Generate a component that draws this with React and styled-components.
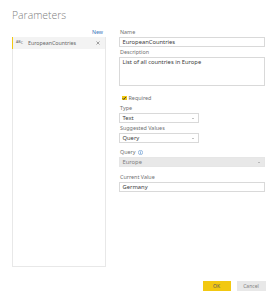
import React from "react";
import styled, { createGlobalStyle } from "styled-components";

const Global = createGlobalStyle`
  html, body { margin: 0; padding: 0; background: #fff; }
  body { font-family: "Noto Sans", "Open Sans", sans-serif; color: #333; }
  * { box-sizing: border-box; }
`;

const Page = styled.div`
  width: 276px;
  height: 300px;
  padding: 8px 10px 0 12px;
  display: flex;
  flex-direction: column;
`;

const Title = styled.div`
  font-family: "Open Sans", "Noto Sans", sans-serif;
  font-weight: 300;
  font-size: 10.4px;
  line-height: 15px;
  color: #808080;
`;

const Body = styled.div`
  display: flex;
  gap: 13px;
  margin-top: 5px;
  align-items: flex-start;
`;

const LeftCol = styled.div`
  width: 94px;
  display: flex;
  flex-direction: column;
`;

const NewLink = styled.div`
  align-self: flex-end;
  margin-right: 3px;
  font-size: 5.3px;
  line-height: 9px;
  color: #3a75bb;
`;

const ListPanel = styled.div`
  height: 230px;
  border: 1px solid #e8e8e8;
`;

const ListItem = styled.div`
  height: 12px;
  display: flex;
  align-items: center;
  border-left: 1.5px solid ${(p) => (p.$selected ? "#f2c811" : "transparent")};
  background: ${(p) => (p.$selected ? "#f3f3f3" : "transparent")};
  padding: 0 5px 0 3px;
  margin-top: -1px;
  margin-left: -1px;
`;

const ParamIcon = styled.span`
  width: 8px;
  font-size: 3.6px;
  line-height: 1;
  color: #666;
  display: flex;
  align-items: flex-end;
  span:nth-child(1) { transform: translateY(-1.5px); }
  span:nth-child(2) { transform: translateY(-0.6px); }
`;

const ItemText = styled.span`
  flex: 1;
  margin-left: 4px;
  font-size: 5.3px;
  color: #666;
  white-space: nowrap;
`;

const RightCol = styled.div`
  width: 146px;
  display: flex;
  flex-direction: column;
`;

const Field = styled.div`
  display: flex;
  flex-direction: column;
  margin-top: ${(p) => p.$mt || 0}px;
`;

const Label = styled.div`
  font-size: 5.4px;
  line-height: 8px;
  height: 8px;
  color: #707070;
  margin-bottom: 1px;
  padding-left: 1px;
  display: flex;
  align-items: center;
  gap: 2px;
`;

const Input = styled.div`
  height: ${(p) => p.$h || 10}px;
  width: ${(p) => p.$w || 146}px;
  border: 1px solid ${(p) => (p.$disabled ? "#e6e6e6" : "#d9d9d9")};
  background: ${(p) => (p.$disabled ? "#e8e8e8" : "#fff")};
  color: ${(p) => (p.$disabled ? "#808080" : "#3c3c3c")};
  font-size: 5.8px;
  line-height: 8px;
  padding: 0 0 0 2.5px;
  display: flex;
  align-items: ${(p) => (p.$multi ? "flex-start" : "center")};
  justify-content: space-between;
  white-space: nowrap;
`;

const Arrow = styled.span`
  width: 0;
  height: 0;
  border-left: 1.2px solid transparent;
  border-right: 1.2px solid transparent;
  border-top: 1.6px solid #888;
  margin-right: 4px;
`;

const CheckRow = styled.div`
  margin-top: 8px;
  height: 8px;
  display: flex;
  align-items: center;
  gap: 2px;
  margin-left: 3px;
  font-size: 5.4px;
  color: #707070;
`;

const Box = styled.span`
  width: 4.5px;
  height: 4.5px;
  background: #f2c811;
  display: flex;
  align-items: center;
  justify-content: center;
`;

const Footer = styled.div`
  display: flex;
  justify-content: flex-end;
  gap: 6px;
  margin-top: 14px;
  padding-right: 0.5px;
`;

const Button = styled.button`
  width: ${(p) => (p.$primary ? 28 : 29)}px;
  height: 10px;
  border: none;
  padding: 0;
  font-family: inherit;
  font-size: 5px;
  color: ${(p) => (p.$primary ? "#5a5a5a" : "#808080")};
  background: ${(p) => (p.$primary ? "#f2c811" : "#e8e8e8")};
`;

function InfoIcon() {
  return (
    <svg width="5" height="5" viewBox="0 0 10 10">
      <circle cx="5" cy="5" r="4.3" fill="none" stroke="#3b7dc4" strokeWidth="1" />
      <path d="M5 4.2V7.6" stroke="#3b7dc4" strokeWidth="1.2" />
      <circle cx="5" cy="2.7" r="0.7" fill="#3b7dc4" />
    </svg>
  );
}

export default function App() {
  return (
    <>
      <Global />
      <Page>
        <Title>Parameters</Title>
        <Body>
          <LeftCol>
            <NewLink>New</NewLink>
            <ListPanel>
              <ListItem $selected>
                <ParamIcon>
                  <span>A</span>
                  <span>B</span>
                  <span>C</span>
                </ParamIcon>
                <ItemText>EuropeanCountries</ItemText>
                <svg width="4" height="4" viewBox="0 0 4 4">
                  <path d="M0.5 0.5L3.5 3.5M3.5 0.5L0.5 3.5" stroke="#666" strokeWidth="0.6" />
                </svg>
              </ListItem>
            </ListPanel>
          </LeftCol>
          <RightCol>
            <Field $mt={0}>
              <Label>Name</Label>
              <Input>EuropeanCountries</Input>
            </Field>
            <Field $mt={1}>
              <Label>Description</Label>
              <Input $h={29} $multi>List of all countries in Europe</Input>
            </Field>
            <CheckRow>
              <Box>
                <svg width="4.5" height="4.5" viewBox="0 0 4 4">
                  <path d="M0.6 2L1.6 3.1L3.4 0.9" stroke="#333" strokeWidth="0.8" fill="none" />
                </svg>
              </Box>
              Required
            </CheckRow>
            <Field $mt={2}>
              <Label>Type</Label>
              <Input $w={80}>
                Text<Arrow />
              </Input>
            </Field>
            <Field $mt={1}>
              <Label>Suggested Values</Label>
              <Input $w={80}>
                Query<Arrow />
              </Input>
            </Field>
            <Field $mt={5}>
              <Label>
                Query<InfoIcon />
              </Label>
              <Input $disabled>
                Europe<Arrow />
              </Input>
            </Field>
            <Field $mt={6}>
              <Label>Current Value</Label>
              <Input>Germany</Input>
            </Field>
          </RightCol>
        </Body>
        <Footer>
          <Button $primary>OK</Button>
          <Button>Cancel</Button>
        </Footer>
      </Page>
    </>
  );
}
